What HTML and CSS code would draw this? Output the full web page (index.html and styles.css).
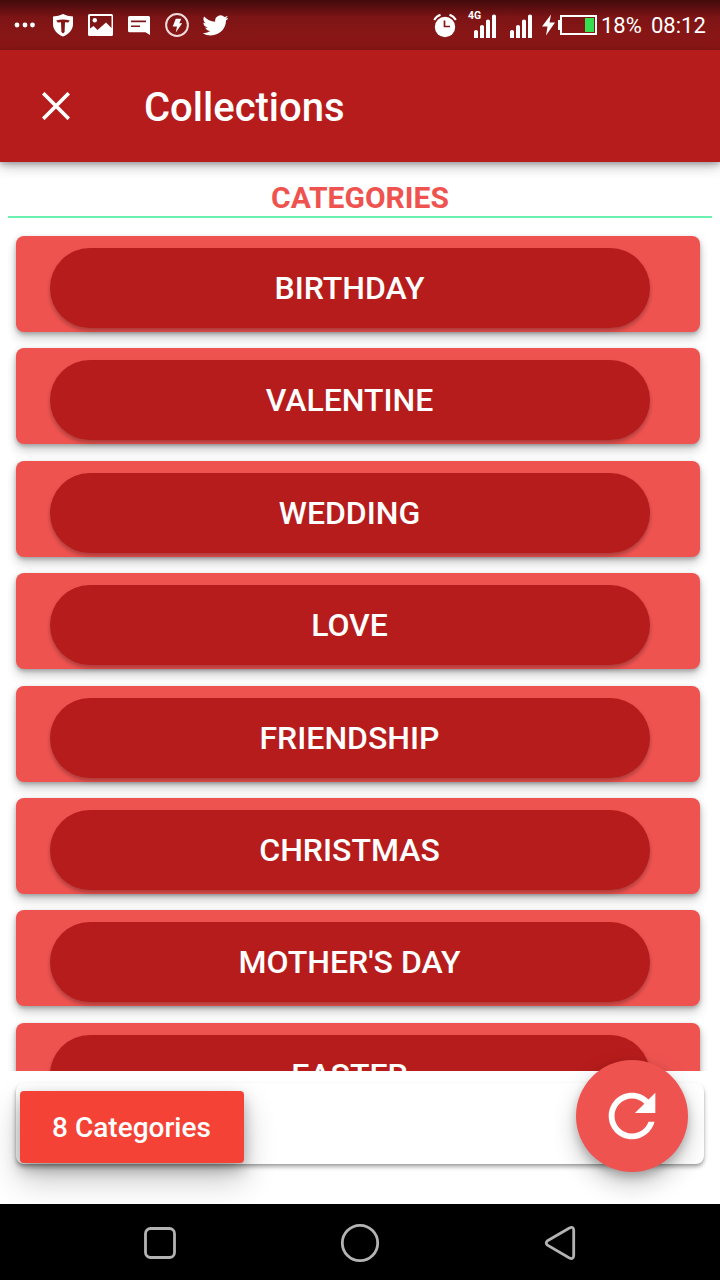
FILE: index.html
```html
<!DOCTYPE html>
<html lang="en">
<head>
<meta charset="utf-8">
<title>Collections</title>
<link rel="stylesheet" href="styles.css">
</head>
<body>
<div class="screen">
  <div class="status">
    <div class="status-left">
      <svg width="22" height="24" viewBox="0 0 22 24"><circle cx="3" cy="12" r="2.4"/><circle cx="11" cy="12" r="2.4"/><circle cx="18.5" cy="12" r="2.4"/></svg>
      <svg class="shield" width="20" height="24" viewBox="0 0 20 24"><path d="M0 3.5Q6 3 10 1Q14 3 20 3.5V11C20 17 15.5 21.5 10 23.5C4.5 21.5 0 17 0 11Z"/><path class="cut" d="M3.2 7.4Q10 5.700 16.800 7.400L15.300 9.600L12 9.200L11.600 19L10 20.500L8.400 19L8 9.200L4.700 9.600Z"/></svg>
      <svg class="photo" width="25" height="24" viewBox="0 0 25 24"><path fill-rule="evenodd" d="M1.500 1H23.500Q25 1 25 2.500V21.500Q25 23 23.500 23H1.500Q0 23 0 21.500V2.500Q0 1 1.500 1ZM2 3V15.500L5.500 13L9.500 17L18 9.500L23.500 15V3Z"/><circle cx="6.800" cy="7.200" r="2.200"/></svg>
      <svg class="message" width="22" height="24" viewBox="0 0 22 24"><path fill-rule="evenodd" d="M1.500 3H20.500Q22 3 22 4.500V22L17.500 19.300H1.500Q0 19.300 0 17.800V4.500Q0 3 1.500 3ZM3 7.600V9.200H18V7.600ZM3 12.500V14.100H12V12.500Z"/></svg>
      <svg class="charge" width="24" height="24" viewBox="0 0 24 24"><circle class="ring" cx="12" cy="12" r="10.900"/><path d="M10.800 5.800H16.300L14.300 10.200H17.200L10.800 19.500L12 13.500H7.700Z"/></svg>
      <svg class="bird" width="25" height="24" viewBox="0.600 1.800 22.800 20.500" preserveAspectRatio="none"><path d="M23.950 4.570a10 10 0 01-2.820.770 4.960 4.960 0 002.160-2.720c-.950.550-2 .950-3.120 1.180a4.920 4.920 0 00-8.380 4.480C7.690 8.090 4.070 6.130 1.640 3.160a4.820 4.820 0 00-.670 2.480c0 1.710.870 3.210 2.190 4.100a4.900 4.900 0 01-2.230-.620v.060a4.920 4.920 0 003.950 4.830 5 5 0 01-2.210.080 4.940 4.940 0 004.600 3.420A9.870 9.870 0 010 19.540a14 14 0 007.550 2.210c9.050 0 14-7.500 14-13.980 0-.210 0-.420-.020-.630a9.940 9.940 0 002.460-2.550z"/></svg>
    </div>
    <div class="status-right">
      <svg width="24" height="25" viewBox="0 0 24 25"><circle cx="12" cy="14" r="10.200"/><path class="alarm-ear" d="M1.200 7Q3 3.500 7.500 1.800M16.500 1.800Q21 3.500 22.800 7"/><path class="hand" d="M11.500 7.500V13.500H17"/></svg>
      <div class="network"><span class="lte">4G</span><svg width="22" height="24" viewBox="0 0 22 24"><path d="M0 17.500Q0 16 2 16T4 17.500V24H0ZM6 12.500Q6 11 8 11T10 12.500V24H6ZM12 7Q12 5.500 14 5.500T16 7V24H12ZM18 2Q18 .500 20 .500T22 2V24H18Z"/></svg></div>
      <svg class="signal" width="22" height="24" viewBox="0 0 22 24"><path d="M0 17.500Q0 16 2 16T4 17.500V24H0ZM6 12.500Q6 11 8 11T10 12.500V24H6ZM12 7Q12 5.500 14 5.500T16 7V24H12ZM18 2Q18 .500 20 .500T22 2V24H18Z"/></svg>
      <svg class="bolt" width="13" height="22" viewBox="0 0 13 22"><path d="M9 .500L0 12.500H5.500L4 21.500L13 8.500H7.500Z"/></svg>
      <svg class="battery" width="39" height="20" viewBox="0 0 39 20"><path d="M0 5H3V15H0Z"/><rect class="case" x="3" y="1" width="35" height="18"/><rect class="level" x="27" y="3" width="9" height="14"/></svg>
      <span class="percent">18%</span><span class="clock">08:12</span>
    </div>
  </div>

  <header class="bar">
    <svg class="close" width="28" height="28" viewBox="0 0 28 28"><path d="M1.200 1.200L26.800 26.800M26.800 1.200L1.200 26.800"/></svg>
    <h1>Collections</h1>
  </header>

  <main class="content">
    <h2 class="heading">CATEGORIES</h2>
    <div class="list">
      <div class="card"><div class="pill">BIRTHDAY</div></div>
      <div class="card"><div class="pill">VALENTINE</div></div>
      <div class="card"><div class="pill">WEDDING</div></div>
      <div class="card"><div class="pill">LOVE</div></div>
      <div class="card"><div class="pill">FRIENDSHIP</div></div>
      <div class="card"><div class="pill">CHRISTMAS</div></div>
      <div class="card"><div class="pill">MOTHER'S DAY</div></div>
      <div class="card"><div class="pill">EASTER</div></div>
    </div>
    <div class="footer">
      <div class="count">8 Categories</div>
      <div class="fab"><svg width="70" height="70" viewBox="0 0 24 24"><path d="M17.650 6.350C16.200 4.900 14.210 4 12 4c-4.420 0-7.990 3.580-7.990 8s3.570 8 7.990 8c3.730 0 6.840-2.550 7.730-6h-2.080c-.820 2.330-3.040 4-5.650 4-3.310 0-6-2.690-6-6s2.690-6 6-6c1.660 0 3.140.690 4.220 1.780L13 11h7V4l-2.350 2.350z"/></svg></div>
    </div>
  </main>

  <nav class="nav">
    <svg width="40" height="40" viewBox="0 0 40 40"><rect x="5.500" y="5.500" width="29" height="29" rx="5"/></svg>
    <svg width="40" height="40" viewBox="0 0 40 40"><circle cx="20" cy="20" r="17.700"/></svg>
    <svg width="40" height="40" viewBox="0 0 40 40"><path d="M7.500 17.800L29 5.200Q33.500 3 33.700 7V32.500Q33.500 37 29 34.800L7.500 22.200Q5 20 7.500 17.800Z"/></svg>
  </nav>
</div>
</body>
</html>
```

FILE: styles.css
```css
* { box-sizing: border-box; }
body { margin: 0; font-family: Roboto, "Liberation Sans", sans-serif; background: #fff; }
svg { display: block; flex: none; fill: #fff; }
.screen { width: 720px; height: 1280px; display: flex; flex-direction: column; overflow: hidden; }

.status { height: 50px; flex: none; padding: 0 15px 0 14px; display: flex; justify-content: space-between; color: #fff;
  background: linear-gradient(#430a0b 0, #590e0f 7px, #7c1415 17px, #861616 30px, #8b1616 50px); }
.status-left, .status-right { display: flex; align-items: center; }
.shield { margin-left: 17px; }
.cut { fill: #841616; }
.photo { margin-left: 15px; }
.message { margin-left: 15px; }
.charge { margin-left: 15px; }
.ring { fill: none; stroke: #f0dada; stroke-width: 2; }
.bird { margin-left: 14px; height: 21px; }
.alarm-ear { fill: none; stroke: #fff; stroke-width: 2; }
.hand { fill: none; stroke: #861616; stroke-width: 1.700; }
.network { display: flex; margin-left: 11px; padding-top: 2px; }
.lte { width: 6px; margin-top: -4px; font-size: 10.500px; line-height: 12px; font-weight: 700; white-space: nowrap; overflow: visible; }
.signal { margin: 2px 0 0 14px; }
.bolt { margin-left: 10px; }
.battery { margin-left: 3px; }
.case { fill: none; stroke: #fff; stroke-width: 2; }
.level { fill: #35df50; }
.percent, .clock { font-size: 22px; line-height: 26px; padding-top: 2px; white-space: nowrap; }
.percent { width: 40px; margin-left: 4px; }
.clock { width: 54px; margin-left: 10px; }

.bar { height: 112px; flex: none; display: flex; align-items: center; padding-left: 42px; color: #fff; background: #b71c1c;
  box-shadow: 0 4px 12px rgba(0,0,0,.28), 0 2px 5px rgba(0,0,0,.22); z-index: 1; }
.close path { fill: none; stroke: #fff; stroke-width: 3.700; }
.bar h1 { margin: 4px 0 0 74px; font-size: 40px; line-height: 48px; font-weight: 500; }

.content { height: 1042px; flex: none; display: flex; flex-direction: column; }
.heading { height: 56px; flex: none; margin: 0 8px; padding-top: 18px; border-bottom: 2px solid #69f0ae; text-align: center;
  color: #ef5350; font-size: 30px; line-height: 36px; font-weight: 700; }
.list { height: 853px; flex: none; margin: 0 12px 0 8px; padding: 18px 8px 0; overflow: hidden; display: flex; flex-direction: column; gap: 16.410px; }
.card { height: 96px; flex: none; padding: 12px 50px 4px 34px; border-radius: 8px; background: #ef5350;
  box-shadow: 0 6px 11px rgba(0,0,0,.2), 0 2px 4px rgba(0,0,0,.26); }
.pill { height: 80px; padding-right: 1px; border-radius: 40px; background: #b71c1c; color: #fff; text-align: center; font-size: 32px; line-height: 80px;
  font-weight: 500; box-shadow: 0 3px 4px rgba(0,0,0,.28); }

.footer { position: relative; height: 81px; flex: none; margin: 12px 16px 0; padding: 8px 4px; border-radius: 8px; background: #fff;
  box-shadow: 0 3px 4px rgba(0,0,0,.32), 0 1px 2px rgba(0,0,0,.1); }
.count { width: 224px; height: 72px; padding-right: 1px; border-radius: 4px; background: #f44336; color: #fff; text-align: center; font-size: 28px; line-height: 73px;
  font-weight: 500; box-shadow: 0 16px 32px rgba(0,0,0,.24), 0 6px 14px rgba(0,0,0,.26); }
.fab { position: absolute; right: 16px; top: -23px; width: 112px; height: 112px; border-radius: 50%; display: flex; align-items: center;
  justify-content: center; background: #ef5350; box-shadow: 0 12px 24px rgba(0,0,0,.22), 0 5px 10px rgba(0,0,0,.22); }

.nav { position: relative; height: 76px; flex: none; padding: 1px 140px 0; display: flex; align-items: center; justify-content: space-between; background: #000; }
.nav svg { fill: none; stroke: #b3b3b3; stroke-width: 2.800; }
```
